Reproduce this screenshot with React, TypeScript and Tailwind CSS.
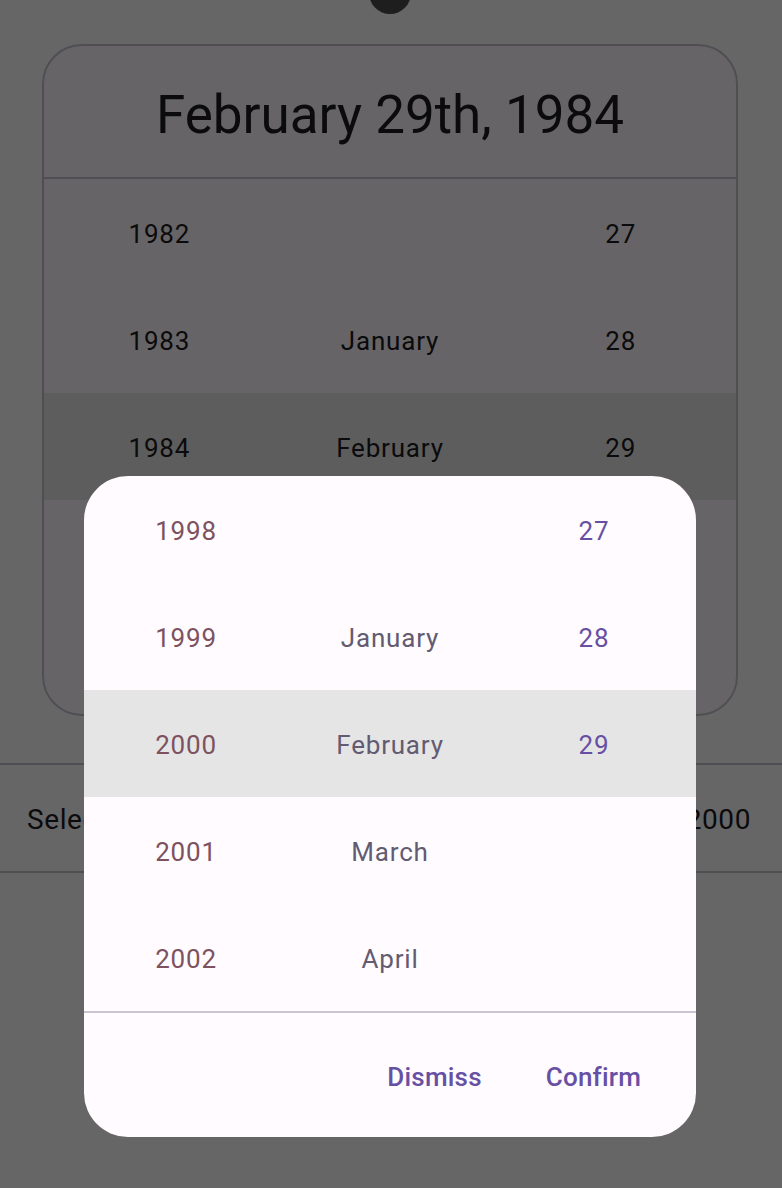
import React from 'react';

type Row = { year: string; month: string; day: string; selected?: boolean };

// rows 4 and 5 of the page sit fully behind the dialog
const pageRows: Row[] = [
  { year: '1982', month: '', day: '27' },
  { year: '1983', month: 'January', day: '28' },
  { year: '1984', month: 'February', day: '29', selected: true },
  { year: '', month: '', day: '' },
  { year: '', month: '', day: '' },
];

const dialogRows: Row[] = [
  { year: '1998', month: '', day: '27' },
  { year: '1999', month: 'January', day: '28' },
  { year: '2000', month: 'February', day: '29', selected: true },
  { year: '2001', month: 'March', day: '' },
  { year: '2002', month: 'April', day: '' },
];

const WheelRow: React.FC<{ row: Row; dialog?: boolean }> = ({ row, dialog }) => (
  <div
    className={`grid grid-cols-3 h-[107px] pt-[4px] items-center text-center text-[26px] tracking-[0.8px] ${
      row.selected ? (dialog ? 'bg-[#e6e5e5]' : 'bg-[#e8e8e8]') : ''
    }`}
  >
    <span className={dialog ? 'text-[#7d5260]' : 'text-[#1c1b1f]'}>{row.year}</span>
    <span className={dialog ? 'text-[#625b71]' : 'text-[#1c1b1f]'}>{row.month}</span>
    <span className={dialog ? 'text-[#6750a4]' : 'text-[#1c1b1f]'}>{row.day}</span>
  </div>
);

export default function App() {
  return (
    <div className="relative h-[1188px] overflow-hidden bg-white font-['Roboto',sans-serif]">
      {/* Page behind the dialog */}
      <div className="pt-[44px] pl-[42px] pr-[44px]">
        <div className="rounded-[40px] border-2 border-[#cac4d0] bg-[#fffbfe] overflow-hidden">
          <div className="h-[133px] pt-[8px] flex items-center justify-center text-[53px] text-[#1c1b1f] border-b-2 border-[#cac4d0]">
            February 29th, 1984
          </div>
          {pageRows.map((r, i) => (
            <WheelRow key={i} row={r} />
          ))}
        </div>
      </div>

      <div className="mt-[47px] h-[110px] pt-[4px] border-y-2 border-[#cac4d0] flex items-center justify-between pl-[27px] pr-[31px] text-[28px] tracking-[0.6px] text-[#1c1b1f]">
        <span>Selected date</span>
        <span>February 29, 2000</span>
      </div>

      {/* Scrim */}
      <div className="absolute inset-0 bg-black/60" />

      {/* Dialog */}
      <div className="absolute inset-0 flex items-end justify-center pb-[51px] pr-[2px]">
        <div className="w-[612px] rounded-[44px] bg-[#fffbfe] overflow-hidden">
          {dialogRows.map((r) => (
            <WheelRow key={r.year} row={r} dialog />
          ))}
          <div className="border-t-2 border-[#cac4d0]" />
          <div className="h-[124px] pt-[4px] flex items-center justify-end gap-[64px] pr-[55px] text-[26px] font-medium tracking-[0.2px] text-[#6750a4]">
            <button>Dismiss</button>
            <button>Confirm</button>
          </div>
        </div>
      </div>

      {/* Camera cutout */}
      <div className="absolute left-[369px] top-[-28px] w-[42px] h-[42px] rounded-full bg-[#1e1e1e]" />
    </div>
  );
}
